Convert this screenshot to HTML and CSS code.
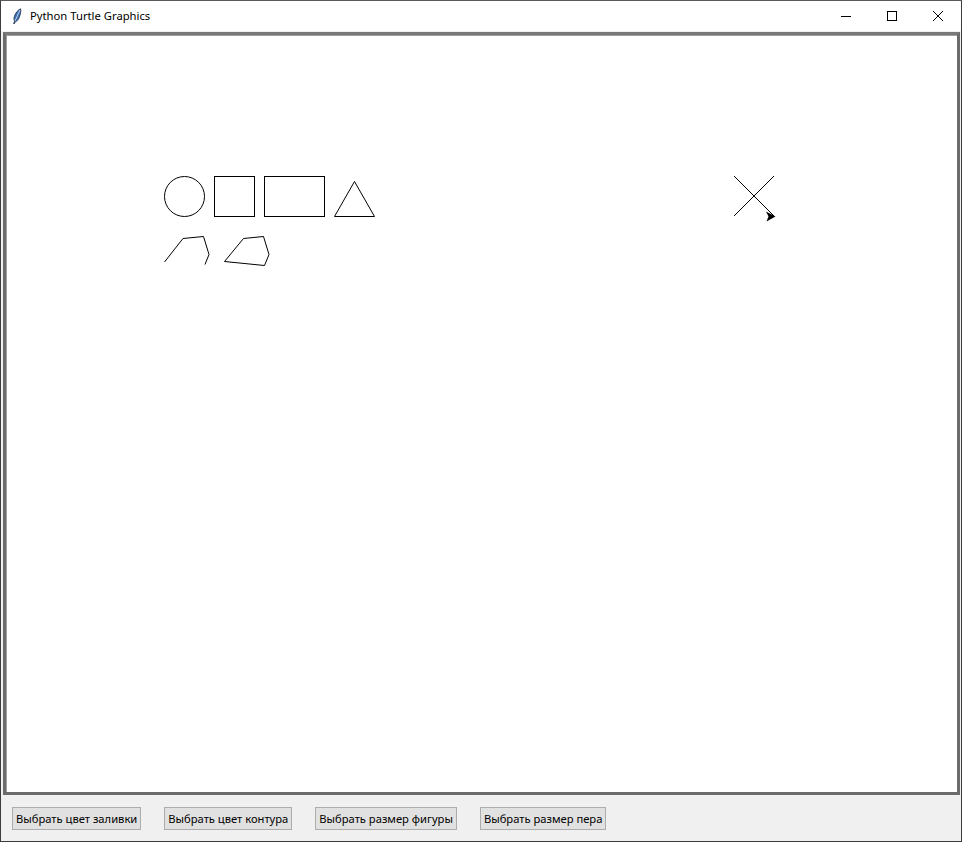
FILE: index.html
```html
<!DOCTYPE html>
<html>
<head>
<meta charset="utf-8">
<title>Python Turtle Graphics</title>
<link rel="stylesheet" href="styles.css">
</head>
<body>
<div class="window">
  <div class="titlebar">
    <svg class="app-icon" width="10" height="16" viewBox="0 0 10 16">
      <path d="M8.6 0.8 C6 2 3.2 5 2.2 9 C1.8 11 2 12.5 2.6 13.2 L1.6 15.6 L2.4 15.8 L3.3 13.6 C5 13.4 6.6 11.5 7.6 8.5 C8.6 5.5 9.2 2.5 8.6 0.8 Z" fill="#3c6fb4" stroke="#1a2c4a" stroke-width="0.8"/>
      <path d="M8 2 L3 13" stroke="#dfe9f5" stroke-width="0.8" fill="none"/>
    </svg>
    <span class="title">Python Turtle Graphics</span>
    <div class="controls">
      <span class="ctl"><svg width="12" height="12" viewBox="0 0 12 12"><path d="M1 6.5 H11" stroke="#000" stroke-width="1"/></svg></span>
      <span class="ctl"><svg width="12" height="12" viewBox="0 0 12 12"><rect x="1.5" y="1.5" width="9" height="9" fill="none" stroke="#000" stroke-width="1"/></svg></span>
      <span class="ctl"><svg width="12" height="12" viewBox="0 0 12 12"><path d="M1 1 L11 11 M11 1 L1 11" stroke="#000" stroke-width="1"/></svg></span>
    </div>
  </div>
  <div class="body">
    <div class="frame">
      <div class="canvas">
        <svg class="drawing" width="951" height="756" viewBox="7 36 951 756" shape-rendering="crispEdges">
          <g fill="none" stroke="#000" stroke-width="1">
            <circle cx="184.5" cy="196.5" r="20" shape-rendering="auto"/>
            <rect x="214.5" y="176.5" width="40" height="40"/>
            <rect x="264.5" y="176.5" width="60" height="40"/>
            <polygon points="334.5,216.5 374.5,216.5 354.5,181.5" shape-rendering="auto"/>
            <polyline points="164.5,262 183,238.5 203.5,236.5 209,254.5 205,264.5" shape-rendering="auto"/>
            <polygon points="224.5,261.5 243.5,238.5 263.5,236.5 269,254.5 264.5,265.5" shape-rendering="auto"/>
            <path d="M734 176 L774 216 M774 176 L734 216" shape-rendering="auto"/>
          </g>
          <polygon points="775.5,216.5 766,211.5 768.5,216.5 766.5,221.5" fill="#000" shape-rendering="auto"/>
        </svg>
      </div>
    </div>
    <div class="toolbar">
      <button class="btn">Выбрать цвет заливки</button>
      <button class="btn">Выбрать цвет контура</button>
      <button class="btn">Выбрать размер фигуры</button>
      <button class="btn">Выбрать размер пера</button>
    </div>
  </div>
</div>
</body>
</html>
```

FILE: styles.css
```css
* { box-sizing: border-box; }
html, body { margin: 0; padding: 0; background: #fff; }
body { font-family: "Noto Sans", "Open Sans", sans-serif; }

.window {
  width: 962px;
  height: 842px;
  border: 1px solid #3c3c3c;
  border-top-color: #5a5a5a;
  display: flex;
  flex-direction: column;
  background: #f0f0f0;
}

.titlebar {
  height: 30px;
  flex: none;
  background: #fff;
  display: flex;
  align-items: center;
  padding-left: 11px;
}
.app-icon { flex: none; }
.title {
  margin-left: 8px;
  font-size: 11.25px;
  color: #000;
  line-height: 16px;
}
.controls {
  margin-left: auto;
  display: flex;
  height: 100%;
}
.ctl {
  width: 46px;
  height: 100%;
  display: flex;
  align-items: center;
  justify-content: center;
}

.body {
  flex: 1;
  display: flex;
  flex-direction: column;
  background: #f0f0f0;
}

.frame {
  margin: 1px 1px 0 2px;
  height: 763px;
  border: 3px solid #6b6b6b;
  border-top-color: #787878;
  background: #fff;
  box-shadow: inset 1px 1px 0 #a0a0a0;
  padding: 1px 0 0 1px;
}
.canvas {
  width: 100%;
  height: 100%;
  background: #fff;
  overflow: hidden;
}
.drawing { display: block; }

.toolbar {
  flex: 1;
  display: flex;
  align-items: flex-start;
  gap: 23px;
  padding: 12px 0 0 11px;
}
.btn {
  font-family: "Noto Sans", "Open Sans", sans-serif;
  font-size: 11.2px;
  line-height: 14px;
  height: 23px;
  padding: 0 3px;
  background: #e1e1e1;
  border: 1px solid #adadad;
  color: #000;
  border-radius: 0;
}
```
